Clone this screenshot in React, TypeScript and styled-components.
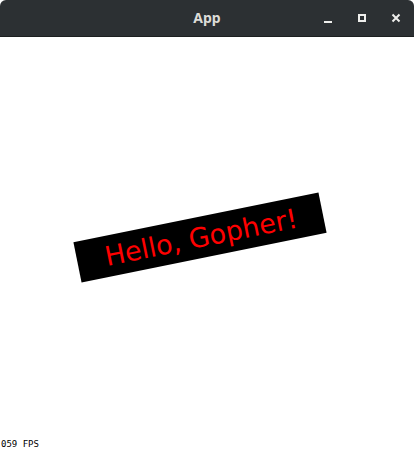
import React from "react";
import styled, { createGlobalStyle } from "styled-components";

const Global = createGlobalStyle`
  html, body { margin: 0; padding: 0; background: #ffffff; }
  body { width: 414px; height: 451px; overflow: hidden; }
`;

const Window = styled.div`
  width: 414px;
  height: 451px;
  display: flex;
  flex-direction: column;
  background: #ffffff;
`;

const TitleBar = styled.div`
  height: 36px;
  flex: none;
  background: #2c3033;
  border-bottom: 1px solid #1c1f20;
  border-radius: 6px 6px 0 0;
  display: grid;
  grid-template-columns: 1fr auto 1fr;
  align-items: center;
`;

const Title = styled.div`
  grid-column: 2;
  font-family: "Noto Sans", "DejaVu Sans", sans-serif;
  font-weight: 700;
  font-size: 14px;
  color: #dcdcd8;
  padding-bottom: 1px;
`;

const Controls = styled.div`
  grid-column: 3;
  justify-self: end;
  display: flex;
  align-items: center;
  gap: 18px;
  padding-right: 10px;
`;

const ControlButton = styled.div`
  width: 16px;
  height: 16px;
  display: flex;
  align-items: center;
  justify-content: center;
  color: #eeeeec;
`;

const Canvas = styled.div`
  flex: 1;
  position: relative;
  display: flex;
  align-items: center;
  justify-content: center;
  overflow: hidden;
`;

const Banner = styled.div`
  width: 250px;
  height: 41px;
  background: #000000;
  display: flex;
  align-items: center;
  justify-content: center;
  transform: translate(-7px, -7px) rotate(-11.46deg);
`;

const BannerText = styled.span`
  font-family: "DejaVu Sans", sans-serif;
  font-size: 27px;
  color: #ff0000;
  white-space: nowrap;
  line-height: 1;
  padding-left: 2px;
`;

const Fps = styled.div`
  position: absolute;
  left: 1px;
  bottom: 2px;
  font-family: "DejaVu Sans Mono", monospace;
  font-size: 9px;
  color: #000000;
  line-height: 10px;
`;

export default function App() {
  return (
    <Window>
      <Global />
      <TitleBar>
        <Title>App</Title>
        <Controls>
          <ControlButton>
            <svg width="16" height="16" viewBox="0 0 16 16">
              <rect x="4" y="11" width="8" height="2" fill="currentColor" />
            </svg>
          </ControlButton>
          <ControlButton>
            <svg width="16" height="16" viewBox="0 0 16 16">
              <rect x="5" y="5" width="6" height="6" fill="none" stroke="currentColor" strokeWidth="2" />
            </svg>
          </ControlButton>
          <ControlButton>
            <svg width="16" height="16" viewBox="0 0 16 16">
              <path d="M4.5 4.5 L11.5 11.5 M11.5 4.5 L4.5 11.5" stroke="currentColor" strokeWidth="2" />
            </svg>
          </ControlButton>
        </Controls>
      </TitleBar>
      <Canvas>
        <Banner>
          <BannerText>Hello, Gopher!</BannerText>
        </Banner>
        <Fps>059 FPS</Fps>
      </Canvas>
    </Window>
  );
}
